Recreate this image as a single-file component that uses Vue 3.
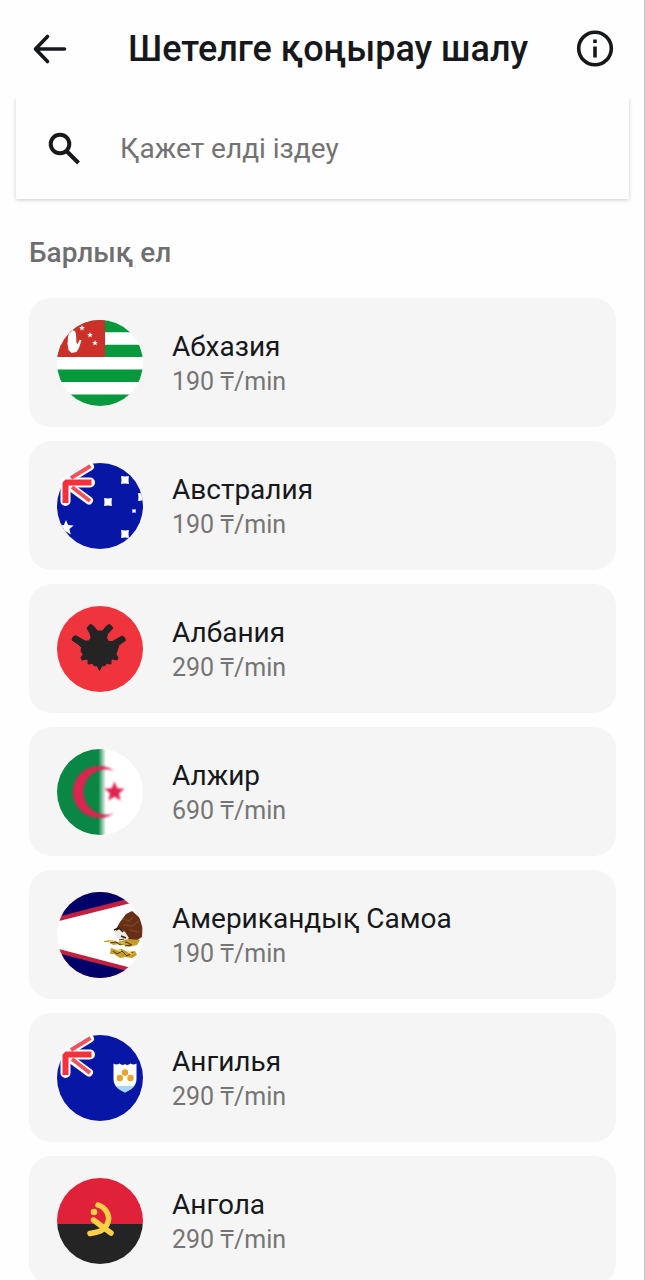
<template>
  <div class="screen">
    <header class="top-bar">
      <button type="button" class="icon-button" aria-label="Артқа">
        <svg width="36" height="36" viewBox="0 0 36 36" class="icon-line">
          <path d="M32.500 18H4M15.500 5.500L3.500 18L15.500 30.500" />
        </svg>
      </button>
      <h1 class="title">Шетелге қоңырау шалу</h1>
      <button type="button" class="icon-button" aria-label="Ақпарат">
        <svg width="38" height="38" viewBox="0 0 38 38">
          <circle cx="19" cy="18.500" r="16.300" fill="none" stroke="#16181b" stroke-width="3.600" />
          <path d="M17.200 9.500h3.600v3.600h-3.600zM17.200 16.500h3.600v11h-3.600z" fill="#16181b" />
        </svg>
      </button>
    </header>

    <main class="content">
      <div class="search-wrap">
        <label class="search">
          <svg width="34" height="34" viewBox="0 0 34 34" class="search-icon">
            <circle cx="13" cy="12" r="9.300" />
            <path d="M20 19.500L31.500 31" />
          </svg>
          <input v-model="query" type="text" class="search-input" placeholder="Қажет елді іздеу" aria-label="Қажет елді іздеу">
        </label>
      </div>

      <h2 class="section-title">Барлық ел</h2>

      <ul class="countries">
        <li v-for="country in filteredCountries" :key="country.code">
          <button type="button" class="country">
            <svg class="flag" viewBox="0 0 86 86" aria-hidden="true">
              <defs>
                <clipPath :id="'round-' + country.code"><circle cx="43" cy="43" r="43" /></clipPath>
                <linearGradient id="algeria-field">
                  <stop offset="0.48" stop-color="#0a8745" />
                  <stop offset="0.57" stop-color="#ffffff" />
                </linearGradient>
                <filter id="soft" x="-10%" y="-10%" width="120%" height="120%">
                  <feGaussianBlur stdDeviation="0.9" />
                </filter>
              </defs>

              <g :clip-path="`url(#round-${country.code})`">
                <!-- Abkhazia -->
                <template v-if="country.code === 'ab'">
                  <rect width="86" height="86" fill="#fff" />
                  <path d="M0 0h86v12.300H0zM0 24.700h86v12.300H0zM0 49.600h86v12.300H0zM0 74.500h86V86H0z" fill="#07993b" />
                  <rect width="48" height="37" fill="#cb3029" />
                  <path d="M11 17l1-4 2-1 1-2 3 1 1 3 0.500 9 1 1 2-4 2 0-2.500 8-2.500 4-5 1-3-3-1-6z" fill="#fff" />
                  <path
                    v-for="([x, y]) in [[25, 8], [33, 15], [38, 23]]"
                    :key="x"
                    :d="starPath(x, y, 3)"
                    fill="#fff"
                  />
                </template>

                <!-- Australia -->
                <template v-else-if="country.code === 'au'">
                  <rect width="86" height="86" fill="#0816a6" />
                  <path
                    v-for="([x, y, r]) in australiaStars"
                    :key="`${x}-${y}`"
                    :d="sparkPath(x, y, r)"
                    fill="#fff"
                  />
                  <path :d="starPath(9, 65, 8)" fill="#fff" />
                </template>

                <!-- Anguilla -->
                <template v-else-if="country.code === 'ai'">
                  <rect width="86" height="86" fill="#0816a6" />
                  <path d="M56.500 28.500q3 2 6 0 3 2.500 5.500 0.500 2.500 2 5.500-0.500 3 2 6 0V44c0 7-5 10-11.500 13.500C61.500 54 56.500 51 56.500 44z" fill="#fff" />
                  <path d="M58.500 51h19c-2 3-6 4.500-9.500 6.500-3.500-2-7.500-3.500-9.500-6.500z" fill="#a5d5fb" />
                  <g fill="#eda32b">
                    <circle cx="68" cy="37.500" r="3.200" />
                    <circle cx="62.800" cy="43" r="3.200" />
                    <circle cx="73.500" cy="43" r="3.200" />
                  </g>
                </template>

                <!-- Albania -->
                <template v-else-if="country.code === 'al'">
                  <rect width="86" height="86" fill="#ef343d" />
                  <path
                    d="M30 22l3-3.500 3 1 4.500 5.500h5L50 19.500l3-1 3 3.500-5.500 6-1 4 2 3.500 4 0 9.500-5.500 2.500 1.500 1 3-6.500 4.500-2 6-1 3.500 2 3-1 2.500-4.500-1-1.500 1.500 0 3.500-4.500-0.500-2 2.500-2.500-0.500-2.500 5-2.500-5-2.500 0.500-2-2.500-4.500 0.500 0-3.500-1.500-1.500-4.500 1-1-2.500 2-3-2-3.500 0.500-3.500-3-3-6.500-4.500 1-3 2.500-1.500 9.500 5.500 4 0 2-3.500-1-4z"
                    fill="#242424"
                    stroke="#242424"
                    stroke-width="1"
                    stroke-linejoin="round"
                  />
                </template>

                <!-- Algeria -->
                <template v-else-if="country.code === 'dz'">
                  <rect width="86" height="86" fill="url(#algeria-field)" />
                  <g fill="#df2350" filter="url(#soft)">
                    <path d="M57 21.800A26 26 0 1 0 57 64.200A22.700 22.700 0 1 1 57 21.800z" />
                    <path :d="starPath(57.500, 43, 10.500)" />
                  </g>
                </template>

                <!-- American Samoa -->
                <template v-else-if="country.code === 'as'">
                  <rect width="86" height="86" fill="#fff" />
                  <path d="M0 0h86v8L0 29.500zM0 56.500L86 79v7H0z" fill="#c51f40" />
                  <path d="M0 0h86v3L0 25zM0 61l86 22v3H0z" fill="#000069" />
                  <path d="M59 37l4-7 6-8 6-3 7 6 4 8-1 12-6 4-7-1-4-6-4-3-5 1z" fill="#673016" />
                  <path d="M66 27l6 2 4-4M66 33l9 1 7-5M72 38l10 2" fill="none" stroke="#7d4424" stroke-width="1.500" />
                  <path d="M57 40l6-3 5 3 4 6-6 3-5-2z" fill="#ece9e6" />
                  <path d="M57 38l5-2 4 4M64 44l5 2" fill="none" stroke="#302417" stroke-width="1.500" />
                  <path d="M47 49l7-1 7 2 10-3 12 1-3 5-8 2-9-3-7 1-3-3-6 0zM54 56l6 2 5-1 6 3 7-1 2 4-5 3-7-1-5 1-6-4-4 0z" fill="#c69c2b" />
                  <path d="M53 51l6-1 4 3 6-3 6 3M56 59l4 3 5-3 5 5 6-4M62 48l5-1M68 54l6-1" fill="none" stroke="#4b3510" stroke-width="1" />
                  <path d="M52 49l5 0M64 51l4 0M60 58l4 1M71 60l4 2" stroke="#f4d35a" stroke-width="1.500" />
                </template>

                <!-- Angola -->
                <template v-else-if="country.code === 'ao'">
                  <rect width="86" height="46" fill="#df2139" />
                  <rect y="46" width="86" height="40" fill="#242424" />
                  <g fill="none" stroke="#fbd045" stroke-width="5.500" stroke-linecap="round">
                    <path d="M41 27C50 30 54 39 50 46.500C46 54 40 54 33 55.500" />
                    <path d="M36.500 42L54 55" />
                  </g>
                  <circle cx="37" cy="34" r="3.300" fill="#fbd045" />
                </template>
              </g>

              <!-- Union Jack corner, pokes out of the circle a little -->
              <g v-if="country.code === 'au' || country.code === 'ai'" fill="none">
                <path d="M14 15L33 3.500M15 25L32 37.500" stroke="#fff" stroke-width="8" stroke-linejoin="round" stroke-linecap="round" />
                <path d="M8.500 38V19.500H33" stroke="#fff" stroke-width="10" stroke-linejoin="round" stroke-linecap="round" />
                <path d="M14 15L33.500 3M15 24L33 38" stroke="#f2525d" stroke-width="4" />
                <path d="M8.500 40V19.500H34.500" stroke="#f3303c" stroke-width="6" stroke-linejoin="bevel" />
              </g>
            </svg>
            <span class="details">
              <span class="name">{{ country.name }}</span>
              <span class="price">{{ country.price }} ₸/min</span>
            </span>
          </button>
        </li>
      </ul>
    </main>
  </div>
</template>

<script setup>
import { ref, computed } from 'vue'

const query = ref('')

const countries = [
  { code: 'ab', name: 'Абхазия', price: 190 },
  { code: 'au', name: 'Австралия', price: 190 },
  { code: 'al', name: 'Албания', price: 290 },
  { code: 'dz', name: 'Алжир', price: 690 },
  { code: 'as', name: 'Американдық Самоа', price: 190 },
  { code: 'ai', name: 'Ангилья', price: 290 },
  { code: 'ao', name: 'Ангола', price: 290 }
]

const australiaStars = [
  [68, 17, 5.5],
  [51, 39, 5.5],
  [77, 48, 2.5],
  [85, 34, 5.5],
  [68, 71, 5.5]
]

const filteredCountries = computed(() => {
  const search = query.value.trim().toLowerCase()
  if (!search) return countries
  return countries.filter(country => country.name.toLowerCase().includes(search))
})

const radialPath = (cx, cy, outer, inner, points, start) => {
  const coords = []
  for (let i = 0; i < points * 2; i++) {
    const r = i % 2 ? inner : outer
    const angle = start + (i * Math.PI) / points
    coords.push(`${cx + r * Math.cos(angle)} ${cy + r * Math.sin(angle)}`)
  }
  return `M${coords.join('L')}z`
}

const starPath = (cx, cy, r) => radialPath(cx, cy, r, r * 0.45, 5, -Math.PI / 2)

const sparkPath = (cx, cy, r) => radialPath(cx, cy, r, r * 0.64, 4, Math.PI / 4)
</script>

<style>
body {
  margin: 0;
  background: #fefefe;
}
</style>

<style scoped>
.screen {
  display: flex;
  flex-direction: column;
  box-sizing: border-box;
  height: 100vh;
  border-right: 1px solid #c2c2c2;
  background: #fefefe;
  color: #16181b;
  font-family: Roboto, "Noto Sans", sans-serif;
}

button {
  font: inherit;
  color: inherit;
  border: 0;
  cursor: pointer;
}

/* Header */
.top-bar {
  display: flex;
  align-items: center;
  gap: 30px;
  flex: none;
  height: 98px;
  padding: 0 30px 0 32px;
}

.icon-button {
  display: flex;
  padding: 0;
  background: none;
}

.icon-line {
  fill: none;
  stroke: #16181b;
  stroke-width: 3.6;
  stroke-linecap: round;
  stroke-linejoin: round;
}

.title {
  flex: 1;
  margin: 0;
  padding-left: 30px;
  font-size: 36px;
  line-height: 44px;
  font-weight: 500;
}

.content {
  flex: 1;
  min-height: 0;
  overflow-y: auto;
  scrollbar-width: none;
}

/* Search */
.search-wrap {
  padding: 0 15px 0 16px;
}

.search {
  display: flex;
  align-items: center;
  gap: 39px;
  height: 101px;
  padding: 0 31px;
  background: #fefefe;
  box-shadow: 0 1px 4px rgba(0, 0, 0, 0.2);
}

.search-icon {
  flex: none;
  fill: none;
  stroke: #16181b;
  stroke-width: 4;
}

.search-input {
  flex: 1;
  min-width: 0;
  padding: 0;
  border: 0;
  outline: 0;
  background: none;
  color: #16181b;
  font: inherit;
  font-size: 28px;
  line-height: 36px;
}

.search-input::placeholder {
  color: #737373;
  opacity: 1;
}

.section-title {
  margin: 36px 29px 27px;
  color: #6f6f6f;
  font-size: 28px;
  line-height: 36px;
  font-weight: 500;
}

/* Country list */
.countries {
  display: flex;
  flex-direction: column;
  gap: 14px;
  margin: 0;
  padding: 0 28px 28px 29px;
  list-style: none;
}

.country {
  display: flex;
  align-items: center;
  gap: 29px;
  width: 100%;
  height: 129px;
  padding: 0 28px;
  border-radius: 22px;
  background: #f5f5f5;
  text-align: left;
}

.flag {
  flex: none;
  width: 86px;
  height: 86px;
  overflow: visible;
}

.details {
  display: flex;
  flex-direction: column;
  padding-top: 2px;
}

.name {
  font-size: 28px;
  line-height: 36px;
}

.price {
  color: #757575;
  font-size: 25px;
  line-height: 34px;
}
</style>
